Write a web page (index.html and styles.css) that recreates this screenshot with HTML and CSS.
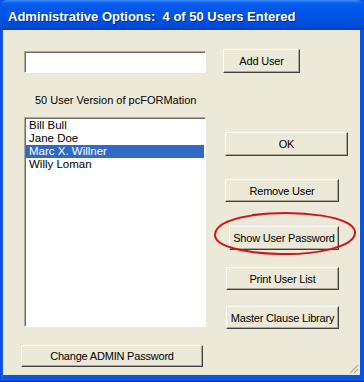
FILE: index.html
```html
<!DOCTYPE html>
<html lang="en">
<head>
    <meta charset="UTF-8">
    <title>Administrative Options</title>
    <link rel="stylesheet" href="styles.css">
</head>
<body>
    <div class="window">
        <div class="titlebar">Administrative Options:&nbsp; 4 of 50 Users Entered</div>
        <div class="frame">
            <div class="content">
                <div class="left-col">
                    <input class="name-input" type="text">
                    <div class="version">50 User Version of pcFORMation</div>
                    <ul class="user-list">
                        <li>Bill Bull</li>
                        <li>Jane Doe</li>
                        <li class="selected">Marc X. Willner</li>
                        <li>Willy Loman</li>
                    </ul>
                    <button class="btn btn-admin">Change ADMIN Password</button>
                </div>
                <div class="right-col">
                    <button class="btn btn-add">Add User</button>
                    <button class="btn btn-ok">OK</button>
                    <button class="btn btn-remove">Remove User</button>
                    <button class="btn btn-show">Show User Password</button>
                    <button class="btn btn-print">Print User List</button>
                    <button class="btn btn-master">Master Clause Library</button>
                </div>
                <!-- grip in the corner -->
                <svg class="grip" width="12" height="12" viewBox="0 0 12 12">
                    <path d="M11 2 L2 11 M11 6 L6 11 M11 10 L10 11" stroke="#fff" stroke-width="1"/>
                    <path d="M11 3 L3 11 M11 7 L7 11" stroke="#aca899" stroke-width="1.2"/>
                </svg>
            </div>
        </div>
        <!-- red marker drawn over the dialog -->
        <svg class="marker" width="148" height="46" viewBox="0 0 148 46">
            <path d="M40 4 C 90 -2, 142 6, 143 21 C 144 37, 100 44, 68 43 C 30 42, 3 35, 3 24 C 3 12, 22 6, 52 3"
                  fill="none" stroke="#d4121a" stroke-width="2"/>
        </svg>
    </div>
</body>
</html>
```

FILE: styles.css
```css
body {
    margin: 0;
    padding: 0;
    background-color: #ffffff;
    font-family: "Liberation Sans", Arial, sans-serif;
    font-size: 11px;
}

.window {
    position: relative;
    width: 364px;
    height: 382px;
    display: flex;
    flex-direction: column;
    background-color: #0a54e3;
}

.titlebar {
    height: 30px;
    box-sizing: border-box;
    padding: 9px 0 0 8px;
    border-radius: 7px 7px 0 0;
    background: linear-gradient(to bottom, #3d8dfd 0, #0a5fee 3px, #0056ee 8px, #0054e3 18px, #004ad8 26px, #0042cc 30px);
    color: #ffffff;
    font-weight: bold;
    font-size: 13px;
    white-space: pre;
    text-shadow: 1px 1px 0 #0a2a80;
}

.frame {
    flex: 1;
    display: flex;
    padding: 0 4px 6px 3px;
    background: linear-gradient(to right, #0a3fd0 0, #1660f0 2px, #0a54e3 3px);
    border-bottom: 1px solid #00209a;
}

.content {
    position: relative;
    flex: 1;
    display: flex;
    padding: 19px 0 0 21px;
    gap: 17px;
    background-color: #ece9d8;
}

.left-col {
    display: flex;
    flex-direction: column;
    width: 182px;
    padding-top: 2px;
}

.name-input {
    width: 182px;
    height: 22px;
    box-sizing: border-box;
    margin: 0;
    border: 1px solid;
    border-color: #aca899 #ffffff #ffffff #aca899;
    box-shadow: inset 1px 1px 0 #716f64;
    background-color: #ffffff;
}

.version {
    margin-top: 21px;
    padding-left: 11px;
    line-height: 13px;
    color: #000000;
}

.user-list {
    list-style: none;
    margin: 10px 0 0 0;
    padding: 1px;
    height: 210px;
    box-sizing: border-box;
    border: 1px solid;
    border-color: #aca899 #ffffff #ffffff #aca899;
    box-shadow: inset 1px 1px 0 #716f64;
    background-color: #ffffff;
    font-size: 11.5px;
}

.user-list li {
    height: 13px;
    line-height: 13px;
    padding-left: 3px;
    color: #000000;
}

.user-list li.selected {
    background-color: #316ac5;
    color: #ffffff;
}

.btn {
    display: block;
    margin: 0;
    padding: 0;
    height: 24px;
    box-sizing: border-box;
    border: 1px solid;
    border-color: #ffffff #404040 #404040 #ffffff;
    box-shadow: inset -1px -1px 0 #aca899;
    background-color: #ece9d8;
    color: #000000;
    font-family: "Liberation Sans", Arial, sans-serif;
    font-size: 11px;
    letter-spacing: -0.2px;
    white-space: nowrap;
    text-align: center;
}

.btn-admin {
    width: 182px;
    height: 22px;
    margin: 18px 0 0 -3px;
}

.right-col {
    display: flex;
    flex-direction: column;
    align-items: flex-start;
}

.btn-add {
    width: 77px;
}

.btn-ok {
    width: 123px;
    margin: 59px 0 0 2px;
}

.btn-remove {
    width: 114px;
    height: 23px;
    margin: 23px 0 0 2px;
}

.btn-show {
    width: 110px;
    margin: 24px 0 0 6px;
}

.btn-print {
    width: 113px;
    height: 23px;
    margin: 17px 0 0 3px;
}

.btn-master {
    width: 113px;
    height: 23px;
    margin: 16px 0 0 3px;
}

.grip {
    position: absolute;
    right: 1px;
    bottom: 1px;
}

.marker {
    position: absolute;
    left: 212px;
    top: 211px;
}
```
